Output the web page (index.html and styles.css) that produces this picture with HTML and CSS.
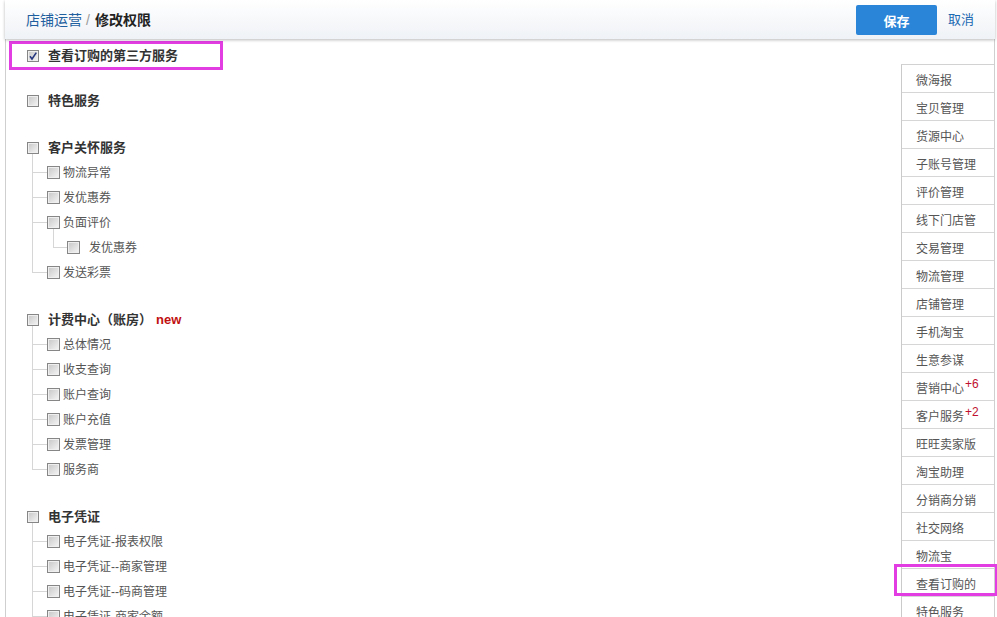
FILE: index.html
```html
<!DOCTYPE html>
<html lang="zh-CN">
<head>
<meta charset="utf-8">
<title>修改权限</title>
<link rel="stylesheet" href="styles.css">
</head>
<body>
<div class="page">
  <div class="header">
    <div class="crumb"><a class="crumb-link">店铺运营</a><span class="sep">/</span><span class="crumb-cur">修改权限</span></div>
    <div class="actions">
      <button class="btn-save">保存</button>
      <a class="btn-cancel">取消</a>
    </div>
  </div>
  <div class="main">
    <div class="tree">
      <div class="hl-row">
        <span class="cb checked"><svg viewBox="0 0 12 12" width="12" height="12"><path d="M3 6.2 L5 9 L9.3 2.6" fill="none" stroke="#28387f" stroke-width="1.6"/></svg></span>
        <span class="head-lbl">查看订购的第三方服务</span>
      </div>

      <div class="groups">
        <div class="group">
          <div class="head"><span class="cb"></span><span class="head-lbl">特色服务</span></div>
        </div>

        <div class="group">
          <div class="head"><span class="cb"></span><span class="head-lbl">客户关怀服务</span></div>
          <ul class="kids">
            <li class="kid"><div class="row"><span class="cb sm"></span><span class="lbl">物流异常</span></div></li>
            <li class="kid"><div class="row"><span class="cb sm"></span><span class="lbl">发优惠券</span></div></li>
            <li class="kid"><div class="row"><span class="cb sm"></span><span class="lbl">负面评价</span></div>
              <ul class="kids nested">
                <li class="kid"><div class="row"><span class="cb sm"></span><span class="lbl wide">发优惠券</span></div></li>
              </ul>
            </li>
            <li class="kid"><div class="row"><span class="cb sm"></span><span class="lbl">发送彩票</span></div></li>
          </ul>
        </div>

        <div class="group">
          <div class="head"><span class="cb"></span><span class="head-lbl">计费中心（账房）</span><span class="new">new</span></div>
          <ul class="kids">
            <li class="kid"><div class="row"><span class="cb sm"></span><span class="lbl">总体情况</span></div></li>
            <li class="kid"><div class="row"><span class="cb sm"></span><span class="lbl">收支查询</span></div></li>
            <li class="kid"><div class="row"><span class="cb sm"></span><span class="lbl">账户查询</span></div></li>
            <li class="kid"><div class="row"><span class="cb sm"></span><span class="lbl">账户充值</span></div></li>
            <li class="kid"><div class="row"><span class="cb sm"></span><span class="lbl">发票管理</span></div></li>
            <li class="kid"><div class="row"><span class="cb sm"></span><span class="lbl">服务商</span></div></li>
          </ul>
        </div>

        <div class="group">
          <div class="head"><span class="cb"></span><span class="head-lbl">电子凭证</span></div>
          <ul class="kids">
            <li class="kid"><div class="row"><span class="cb sm"></span><span class="lbl">电子凭证-报表权限</span></div></li>
            <li class="kid"><div class="row"><span class="cb sm"></span><span class="lbl">电子凭证--商家管理</span></div></li>
            <li class="kid"><div class="row"><span class="cb sm"></span><span class="lbl">电子凭证--码商管理</span></div></li>
            <li class="kid"><div class="row"><span class="cb sm"></span><span class="lbl">电子凭证-商家余额</span></div></li>
          </ul>
        </div>
      </div>
    </div>

    <ul class="side">
      <li class="side-item">微海报</li>
      <li class="side-item">宝贝管理</li>
      <li class="side-item">货源中心</li>
      <li class="side-item">子账号管理</li>
      <li class="side-item">评价管理</li>
      <li class="side-item">线下门店管</li>
      <li class="side-item">交易管理</li>
      <li class="side-item">物流管理</li>
      <li class="side-item">店铺管理</li>
      <li class="side-item">手机淘宝</li>
      <li class="side-item">生意参谋</li>
      <li class="side-item">营销中心<sup class="plus">+6</sup></li>
      <li class="side-item">客户服务<sup class="plus">+2</sup></li>
      <li class="side-item">旺旺卖家版</li>
      <li class="side-item">淘宝助理</li>
      <li class="side-item">分销商分销</li>
      <li class="side-item">社交网络</li>
      <li class="side-item">物流宝</li>
      <li class="side-item marked">查看订购的</li>
      <li class="side-item">特色服务</li>
    </ul>
  </div>
</div>
</body>
</html>
```

FILE: styles.css
```css
* { box-sizing: border-box; }
html, body { margin: 0; padding: 0; background: #fff; }
body {
  font-family: "Liberation Sans", "Noto Sans CJK SC", sans-serif;
  font-size: 12px;
  color: #555;
  overflow: hidden;
  height: 617px;
}
ul { list-style: none; margin: 0; padding: 0; }

.page {
  margin: 0 2px 0 5px;
  border-left: 1px solid #cfcfcf;
  border-right: 1px solid #cfcfcf;
  min-height: 617px;
}

.header {
  position: relative;
  z-index: 2;
  height: 39px;
  display: flex;
  align-items: center;
  justify-content: space-between;
  padding: 0 21px 0 20px;
  background: linear-gradient(#ffffff, #eff2f6);
  box-shadow: 0 1px 3px rgba(0,0,0,0.28);
  margin-left: -1px;
  margin-right: -1px;
}
.crumb { font-size: 14px; line-height: 20px; display: flex; align-items: center; padding-left: 1px; }
.crumb-link { color: #1f5f9f; }
.sep { color: #999; margin: 0 5px 0 4px; }
.crumb-cur { color: #222; font-weight: bold; }

.actions { display: flex; align-items: center; gap: 11px; }
.btn-save {
  width: 81px;
  height: 30px;
  border: none;
  border-radius: 2px;
  background: #2a84d8;
  color: #fff;
  font-family: inherit;
  font-size: 13px;
  font-weight: bold;
  padding: 0;
  margin-top: 1px;
}
.btn-cancel { color: #1d69b2; font-size: 13px; line-height: 18px; }

.main { display: flex; align-items: flex-start; }
.tree { flex: 1; padding-top: 2px; padding-left: 3px; }

.hl-row {
  width: 214px;
  height: 29px;
  border: 3px solid #e23de2;
  display: flex;
  align-items: center;
  padding-left: 15px;
}

.cb {
  display: inline-block;
  flex: none;
  width: 12px;
  height: 12px;
  border: 1px solid #868686;
  background: linear-gradient(135deg, #c6c6c6 0%, #dedede 50%, #f6f6f6 100%);
  box-shadow: inset 0 0 0 1px #efefef;
  position: relative;
}
.cb.sm { width: 13px; height: 13px; }
.cb svg { position: absolute; left: -1px; top: -1px; }

.head-lbl { font-size: 13px; font-weight: bold; color: #333; margin-left: 9px; line-height: 18px; }
.new { font-size: 13px; font-weight: bold; color: #c01010; margin-left: 4px; line-height: 18px; }

.groups { padding-top: 19px; padding-left: 18px; }
.group { margin-bottom: 23px; }
.head { height: 24px; display: flex; align-items: center; }

.kids { padding-left: 20px; }
.kid { position: relative; }
.kid::before {
  content: "";
  position: absolute;
  left: -15px;
  top: 0;
  bottom: 0;
  width: 1px;
  background: #d6d6d6;
}
.kids > .kid:first-child::before { top: -6px; }
.kids > .kid:last-child::before { bottom: auto; height: 13px; }
.kids > .kid:first-child:last-child::before { height: 19px; }
.kid::after {
  content: "";
  position: absolute;
  left: -14px;
  top: 12px;
  width: 14px;
  height: 1px;
  background: #d6d6d6;
}
.nested { padding-left: 20px; }
.nested > .kid::before { left: -14px; }
.nested > .kid::after { left: -13px; width: 13px; }

.row { height: 25px; display: flex; align-items: center; }
.lbl { margin-left: 3px; color: #555; line-height: 18px; }
.lbl.wide { margin-left: 9px; }

.side {
  width: 93px;
  margin-top: 25px;
  border-left: 1px solid #cacaca;
  border-top: 1px solid #d2d2d2;
  flex: none;
}
.side-item {
  position: relative;
  height: 28px;
  border-bottom: 1px solid #d6d6d6;
  padding: 7px 0 0 14px;
  line-height: 18px;
  color: #555;
  white-space: nowrap;
}
.plus {
  color: #c01030;
  font-size: 12px;
  vertical-align: 0;
  position: relative;
  top: -5px;
  margin-left: 1px;
  line-height: 0;
}
.side-item.marked::after {
  content: "";
  position: absolute;
  left: -8px;
  right: -4px;
  top: -5px;
  bottom: 0;
  border: 3px solid #e23de2;
}
```
